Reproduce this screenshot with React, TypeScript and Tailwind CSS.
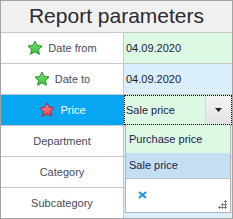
import React from "react";

function Star({ color }: { color: "green" | "red" }) {
  const fill = color === "green" ? "#35c23a" : "#f2414f";
  const light = color === "green" ? "#7ee07a" : "#ff8a92";
  const stroke = color === "green" ? "#1f8a25" : "#b81f2c";
  const id = color === "green" ? "gs" : "rs";
  return (
    <svg width="16" height="16" viewBox="0 0 24 24" className="shrink-0">
      <defs>
        <linearGradient id={id} x1="0" y1="0" x2="0" y2="1">
          <stop offset="0" stopColor={light} />
          <stop offset="1" stopColor={fill} />
        </linearGradient>
      </defs>
      <path
        d="M12 1.5l3.2 6.6 7.3.9-5.3 5.1 1.4 7.3L12 17.8l-6.6 3.6 1.4-7.3L1.5 9l7.3-.9z"
        fill={`url(#${id})`}
        stroke={stroke}
        strokeWidth="1.4"
        strokeLinejoin="round"
      />
    </svg>
  );
}

const font = { fontFamily: '"Liberation Sans", Arial, sans-serif' };

function Row({
  label,
  star,
  value,
  valueBg,
  last,
}: {
  label: string;
  star?: "green" | "red";
  value?: string;
  valueBg: string;
  last?: boolean;
}) {
  return (
    <div className={`flex h-[31px] ${last ? "" : "border-b border-[#c6c6c6]"}`}>
      <div className="w-[123px] border-r border-[#c6c6c6] flex items-center justify-center gap-[5px] text-[11px] text-[#4a4a58]">
        {star && <Star color={star} />}
        <span>{label}</span>
      </div>
      <div className={`flex-1 flex items-center pl-[2px] text-[11px] text-[#1c1c3c] ${valueBg}`}>
        {value}
      </div>
    </div>
  );
}

export default function App() {
  return (
    <div
      className="relative w-[233px] h-[219px] border border-[#a3a3a3] bg-white overflow-hidden"
      style={font}
    >
      <div className="h-[32px] border-b border-[#c6c6c6] bg-[#f0f0f0] flex items-center justify-center text-[21px] text-[#2a2a33] pb-[1px]">
        Report parameters
      </div>
      <Row label="Date from" star="green" value="04.09.2020" valueBg="bg-[#ddf9e4]" />
      <Row label="Date to" star="green" value="04.09.2020" valueBg="bg-[#dbeefb]" />
      <div className="flex h-[31px] border-b border-[#c6c6c6]">
        <div className="w-[123px] bg-[#06a6f3] flex items-center justify-center gap-[5px] text-[11px] text-white">
          <Star color="red" />
          <span>Price</span>
        </div>
        <div className="flex-1 flex bg-[#ddf9e4] border border-dotted border-black">
          <div className="flex-1 flex items-center pl-[1px] text-[11px] text-[#1c1c3c]">
            Sale price
          </div>
          <div className="w-[26px] bg-gradient-to-b from-[#f4f4f4] to-[#e2e2e2] border-l border-[#d8d8d8] flex items-center justify-center">
            <svg width="8" height="5" viewBox="0 0 8 5">
              <path d="M0 0h7L3.5 4z" fill="#222" />
            </svg>
          </div>
        </div>
      </div>
      <Row label="Department" valueBg="bg-[#dbeefb]" />
      <Row label="Category" valueBg="bg-[#dbeefb]" />
      <Row label="Subcategory" valueBg="bg-[#dbeefb]" last />

      <div className="absolute left-[124px] top-[124px] w-[106px] h-[88px] bg-white border border-[#b4b4b4] border-t-0 flex flex-col">
        <div className="h-[28px] bg-[#ddf9e4] flex items-center pl-[3px] text-[11px] text-[#1c2050]">
          Purchase price
        </div>
        <div className="h-[26px] bg-[#c4dff1] flex items-center pl-[3px] text-[11px] text-[#1c2050] border-b border-[#c0c0c0]">
          Sale price
        </div>
        <div className="relative flex-1">
          <svg
            className="absolute left-[12px] top-[12px]"
            width="9"
            height="8"
            viewBox="0 0 9 8"
          >
            <path d="M1 1l7 6M8 1L1 7" stroke="#1d8fe0" strokeWidth="2" />
          </svg>
          <svg
            className="absolute right-[2px] bottom-[2px]"
            width="11"
            height="11"
            viewBox="0 0 11 11"
          >
            {[
              [8, 2],
              [5, 5],
              [8, 5],
              [2, 8],
              [5, 8],
              [8, 8],
            ].map(([x, y], i) => (
              <g key={i}>
                <rect x={x - 1} y={y} width="3" height="1" fill="#808080" />
                <rect x={x} y={y - 1} width="1" height="3" fill="#808080" />
              </g>
            ))}
          </svg>
        </div>
      </div>
    </div>
  );
}
